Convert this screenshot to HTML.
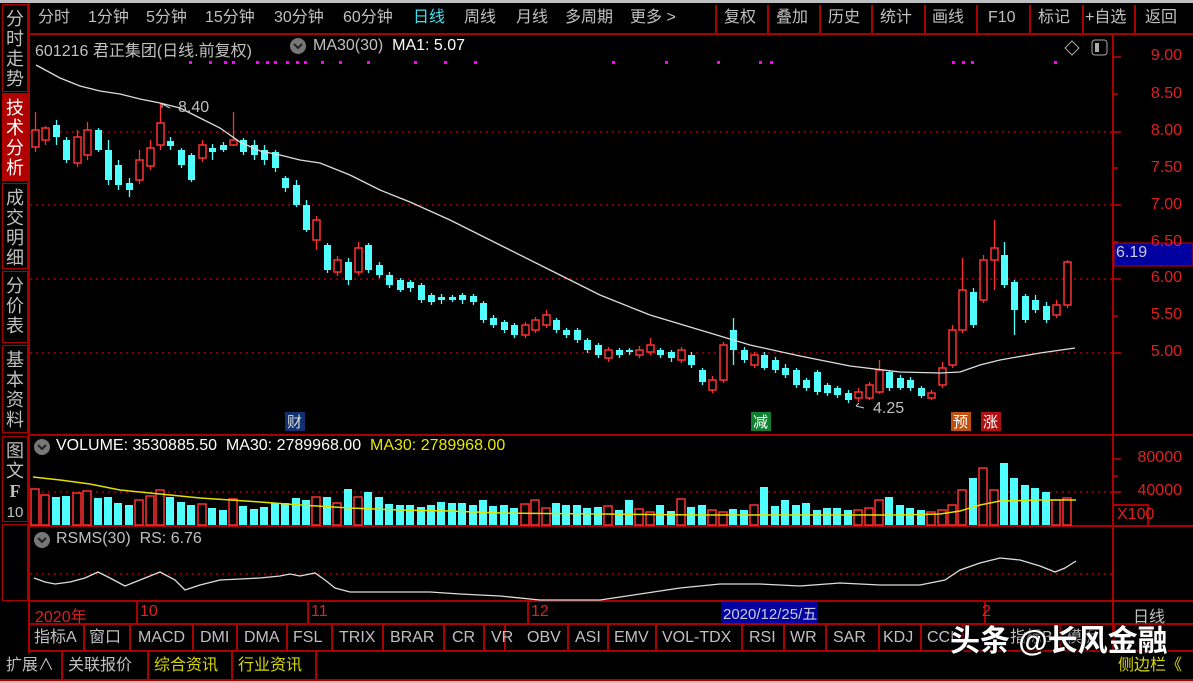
<!DOCTYPE html>
<html><head><meta charset="utf-8"><style>
*{margin:0;padding:0;box-sizing:border-box}
body{width:1193px;height:683px;background:#000;overflow:hidden;position:relative;font-family:"Liberation Sans","Noto Sans CJK SC",sans-serif;color:#c0c0c0}
.a{position:absolute;white-space:nowrap}
.t{font-size:16px;line-height:30px;top:3px}
.side{position:absolute;left:2px;width:26px;font-size:18px;line-height:20px;text-align:center;color:#c0c0c0;border:1px solid #a00}
.bt{font-size:16px;line-height:26px;top:625px}
.bb{font-size:16px;line-height:27px;top:652px}
.ax{font-size:16px;color:#e02020;left:1120px;width:62px;text-align:right}
</style></head><body>
<div class="a" style="left:0;top:0;width:1193px;height:3px;background:#bfbfbf"></div>
<div class="a" style="left:0;top:680px;width:1193px;height:3px;background:#bfbfbf"></div>
<div class="a" style="left:28px;top:33px;width:1165px;height:2px;background:#a00"></div>
<!-- sidebar -->
<div class="side" style="top:4px;height:88px;padding-top:4px">分<br>时<br>走<br>势</div>
<div class="side" style="top:93px;height:88px;padding-top:4px;background:#b00000;color:#fff;border-color:#b00000">技<br>术<br>分<br>析</div>
<div class="side" style="top:183px;height:86px;padding-top:4px">成<br>交<br>明<br>细</div>
<div class="side" style="top:271px;height:72px;padding-top:4px">分<br>价<br>表</div>
<div class="side" style="top:345px;height:88px;padding-top:4px">基<br>本<br>资<br>料</div>
<div class="side" style="top:436px;height:86px;padding-top:4px">图<br>文<br><b style="font-family:'Liberation Serif'">F</b><br><span style="font-size:15px">10</span></div>
<div class="side" style="top:524px;height:77px"></div>
<div class="a" style="left:28px;top:3px;width:2px;height:650px;background:#a00"></div>
<!-- top tabs -->
<div class="a t" style="left:38px">分时</div>
<div class="a t" style="left:88px">1分钟</div>
<div class="a t" style="left:146px">5分钟</div>
<div class="a t" style="left:205px">15分钟</div>
<div class="a t" style="left:274px">30分钟</div>
<div class="a t" style="left:343px">60分钟</div>
<div class="a t" style="left:413px;color:#40e0f0">日线</div>
<div class="a t" style="left:464px">周线</div>
<div class="a t" style="left:516px">月线</div>
<div class="a t" style="left:565px">多周期</div>
<div class="a t" style="left:630px">更多 &gt;</div>
<div class="a t" style="left:724px">复权</div>
<div class="a t" style="left:776px">叠加</div>
<div class="a t" style="left:828px">历史</div>
<div class="a t" style="left:880px">统计</div>
<div class="a t" style="left:932px">画线</div>
<div class="a t" style="left:988px">F10</div>
<div class="a t" style="left:1038px">标记</div>
<div class="a t" style="left:1085px">+自选</div>
<div class="a t" style="left:1145px">返回</div>
<!-- chart svg -->
<svg id="s" class="a" style="left:0;top:0" width="1193" height="683" xmlns="http://www.w3.org/2000/svg">
<g stroke="#a00" stroke-width="2" fill="none">
<path d="M716 5V33M768 5V33M820 5V33M872 5V33M925 5V33M977 5V33M1030 5V33M1083 5V33M1135 5V33"/>
<path d="M1113 35V651M30 435H1193M30 526H1193M30 601H1193M30 624H1193M30 651H1193M1113 505H1148V526"/>
<path d="M137 601V624M308 601V624M528 601V624M985 601V624"/>
<path d="M84 624V651M130 624V651M193 624V651M237 624V651M287 624V651M332 624V651M383 624V651M444 624V651M484 624V651M505 624V651M568 624V651M608 624V651M656 624V651M742 624V651M784 624V651M826 624V651M879 624V651M921 624V651M963 624V651M1060 624V651M1114 624V651M1150 624V651"/>
<path d="M62 652V680M148 652V680M232 652V680M316 652V680M0 680H1193"/>
</g>
<g stroke="#c00" stroke-width="1.2" stroke-dasharray="2 4">
<path d="M30 132H1113M30 205H1113M30 279H1113M30 353H1113M30 492H1113M30 574H1113"/>
</g>
<g stroke="#c00" stroke-width="1.5"><path d="M1113 57h8M1113 94h5M1113 132h8M1113 168h5M1113 205h8M1113 242h5M1113 279h8M1113 316h5M1113 353h8M1113 459h8M1113 476h5M1113 492h8M1113 562h0"/></g>
<g id="c"></g>
<g fill="#f0f" id="dots"></g>
<polyline fill="none" stroke="#ddd" stroke-width="1.3" points="36,65 60,78 80,86 100,91 120,94 140,99 160,103 180,108 200,118 220,128 240,142 260,151 280,155 300,160 320,163 350,175 380,190 410,202 450,220 500,245 550,270 600,295 650,315 700,330 750,345 800,356 850,366 900,372 940,373 960,372 980,365 1000,360 1040,353 1075,348"/>
<polyline fill="none" stroke="#e0e000" stroke-width="1.5" points="33,477 60,480 90,484 120,490 160,494 200,498 260,502 300,505 350,508 400,510 450,511 500,513 600,514 700,515 800,515 900,515 940,514 960,511 980,505 1000,501 1040,500 1076,500"/>
<polyline fill="none" stroke="#ddd" stroke-width="1.3" points="34,578 45,582 55,584 70,582 85,578 98,572 110,578 125,586 140,580 160,572 175,580 185,590 200,585 220,580 240,579 260,578 280,576 290,574 300,576 315,573 325,580 335,588 350,592 380,592 400,592 430,592 460,594 500,596 540,600 600,600 640,594 680,588 720,584 760,584 800,586 840,583 880,585 920,585 945,580 960,570 980,563 1000,558 1020,560 1040,566 1055,572 1065,568 1076,561"/>
<!-- labels -->
<rect x="285" y="412" width="20" height="19" fill="#103070"/>
<rect x="751" y="412" width="20" height="19" fill="#108030"/>
<rect x="951" y="412" width="20" height="19" fill="#c05010"/>
<rect x="981" y="412" width="20" height="19" fill="#b01010"/>
<rect x="1114" y="243" width="79" height="23" fill="#0000a0" stroke="#c00"/>
<rect x="721" y="602" width="97" height="21" fill="#0000a0"/>
<circle cx="298" cy="46" r="8" fill="#777"/><path d="M294 44l4 4 4-4" stroke="#222" stroke-width="2" fill="none"/>
<circle cx="42" cy="447" r="8" fill="#777"/><path d="M38 445l4 4 4-4" stroke="#222" stroke-width="2" fill="none"/>
<circle cx="42" cy="540" r="8" fill="#777"/><path d="M38 538l4 4 4-4" stroke="#222" stroke-width="2" fill="none"/>
<path d="M1072 41l7 7-7 7-7-7z" stroke="#aaa" fill="none"/>
<rect x="1092" y="40" width="15" height="15" rx="3" stroke="#aaa" fill="none"/><rect x="1095" y="43" width="4" height="9" fill="#aaa"/>
<path d="M162 104l8 4M162 104v4M856 406l8 2M856 406l3 -3" stroke="#ccc" fill="none"/>
</svg>
<div class="a" style="left:35px;top:37px;font-size:16px">601216 君正集团(日线.前复权)</div>
<div class="a" style="left:313px;top:37px;font-size:16px">MA30(30)&nbsp; <span style="color:#fff">MA1: 5.07</span></div>
<div class="a" style="left:178px;top:99px;font-size:16px">8.40</div>
<div class="a" style="left:873px;top:400px;font-size:16px">4.25</div>
<div class="a" style="left:287px;top:411px;font-size:15px;color:#ddd">财</div>
<div class="a" style="left:753px;top:411px;font-size:15px;color:#fff">减</div>
<div class="a" style="left:953px;top:411px;font-size:15px;color:#fff">预</div>
<div class="a" style="left:983px;top:411px;font-size:15px;color:#fff">涨</div>
<div class="a ax" style="top:47px">9.00</div>
<div class="a ax" style="top:85px">8.50</div>
<div class="a ax" style="top:122px">8.00</div>
<div class="a ax" style="top:159px">7.50</div>
<div class="a ax" style="top:196px">7.00</div>
<div class="a ax" style="top:233px">6.50</div>
<div class="a" style="left:1116px;top:244px;font-size:16px;color:#ccd">6.19</div>
<div class="a ax" style="top:269px">6.00</div>
<div class="a ax" style="top:306px">5.50</div>
<div class="a ax" style="top:343px">5.00</div>
<div class="a ax" style="top:449px">80000</div>
<div class="a ax" style="top:482px">40000</div>
<div class="a" style="left:1117px;top:506px;font-size:16px;color:#e02020">X100</div>
<div class="a" style="left:56px;top:437px;font-size:16px;color:#fff">VOLUME: 3530885.50&nbsp; MA30: 2789968.00&nbsp; <span style="color:#e8e800">MA30: 2789968.00</span></div>
<div class="a" style="left:56px;top:530px;font-size:16px">RSMS(30)&nbsp; RS: 6.76</div>
<div class="a" style="left:35px;top:603px;font-size:16px;color:#e02020">2020年</div>
<div class="a" style="left:140px;top:603px;font-size:16px;color:#e02020">10</div>
<div class="a" style="left:311px;top:603px;font-size:16px;color:#e02020">11</div>
<div class="a" style="left:531px;top:603px;font-size:16px;color:#e02020">12</div>
<div class="a" style="left:723px;top:603px;font-size:15px;color:#ccd">2020/12/25/五</div>
<div class="a" style="left:982px;top:603px;font-size:16px;color:#e02020">2</div>
<div class="a" style="left:1133px;top:603px;font-size:16px">日线</div>
<div class="a bt" style="left:34px">指标A</div><div class="a bt" style="left:89px">窗口</div>
<div class="a bt" style="left:138px">MACD</div><div class="a bt" style="left:200px">DMI</div>
<div class="a bt" style="left:244px">DMA</div><div class="a bt" style="left:293px">FSL</div>
<div class="a bt" style="left:339px">TRIX</div><div class="a bt" style="left:390px">BRAR</div>
<div class="a bt" style="left:452px">CR</div><div class="a bt" style="left:491px">VR</div>
<div class="a bt" style="left:527px">OBV</div><div class="a bt" style="left:575px">ASI</div>
<div class="a bt" style="left:614px">EMV</div><div class="a bt" style="left:662px">VOL-TDX</div>
<div class="a bt" style="left:749px">RSI</div><div class="a bt" style="left:790px">WR</div>
<div class="a bt" style="left:833px">SAR</div><div class="a bt" style="left:883px">KDJ</div>
<div class="a bt" style="left:927px">CCI</div><div class="a bt" style="left:1010px">指标B</div><div class="a bt" style="left:1066px">模板</div>
<div class="a bb" style="left:6px">扩展∧</div><div class="a bb" style="left:68px">关联报价</div>
<div class="a bb" style="left:154px;color:#d8d800">综合资讯</div><div class="a bb" style="left:238px;color:#d8d800">行业资讯</div>
<div class="a bb" style="left:1118px;color:#d8d800">侧边栏《</div>
<div class="a" style="left:950px;top:622px;font-size:30px;line-height:40px;color:#fff;font-weight:bold;text-shadow:0 0 3px #000,1px 1px 2px #000">头条 @长风金融</div>
<script>
var D=[
[1,130,147,112,152],[1,128,140,126,145],[0,125,137,120,145],[0,140,160,137,163],[1,137,163,130,167],[1,130,155,122,160],[0,130,150,128,152],[0,150,180,140,185],[0,165,185,160,190],[0,183,190,178,197],[1,160,180,150,184],[1,148,166,140,170],[1,123,145,103,150],[0,141,146,137,150],[0,150,165,148,168],[0,155,180,153,182],[1,145,158,140,162],[0,148,152,144,160],[0,145,150,142,152],[1,140,145,112,146],[0,140,152,138,155],[0,145,155,140,160],[0,150,160,145,165],[0,152,168,150,172],[0,178,188,176,192],[0,185,205,180,207],[0,205,230,200,232],[1,220,240,216,250],[0,245,270,243,273],[1,260,272,256,276],[0,262,280,258,285],[1,248,272,242,275],[0,245,270,243,273],[0,265,275,262,278],[0,275,285,272,288],[0,280,290,278,292],[0,282,288,280,292],[0,285,300,283,303],[0,295,302,293,305],[0,297,300,294,304],[0,297,300,295,302],[0,295,300,293,304],[0,296,302,294,305],[0,303,320,301,323],[0,318,325,315,328],[0,322,330,320,333],[0,325,335,323,338],[1,325,335,322,338],[1,320,330,317,333],[1,315,325,310,328],[0,320,330,318,333],[0,330,335,328,338],[0,330,340,328,343],[0,340,350,338,353],[0,345,355,343,358],[1,350,358,347,362],[0,350,355,348,358],[0,350,352,348,355],[1,350,355,346,358],[1,345,352,338,355],[0,350,355,348,358],[0,352,358,350,362],[1,350,360,347,363],[0,355,365,352,368],[0,370,382,368,385],[1,380,390,376,393],[1,345,380,342,383],[0,330,350,318,365],[0,350,360,347,363],[1,355,365,352,368],[0,355,368,352,370],[0,360,370,357,373],[0,368,375,364,378],[0,370,385,368,388],[0,380,388,378,391],[0,372,392,370,395],[0,385,393,383,396],[0,388,395,386,398],[0,393,400,390,403],[1,392,398,388,402],[1,385,398,382,400],[1,370,392,360,394],[0,372,388,370,391],[0,378,388,375,390],[0,380,388,377,391],[0,388,396,386,398],[1,393,398,390,400],[1,368,385,362,388],[1,330,365,325,368],[1,290,330,258,333],[0,292,325,288,328],[1,260,300,255,303],[1,248,260,220,290],[0,255,285,242,288],[0,282,310,280,335],[0,296,320,294,323],[0,300,310,295,313],[0,306,320,302,323],[1,305,315,300,318],[1,262,305,260,308]];
var V=[489,495,497,496,493,491,498,497,503,505,500,496,490,497,502,505,504,508,510,499,506,509,507,503,503,498,500,497,497,503,489,497,492,497,504,505,505,507,505,502,503,503,505,500,506,505,508,504,500,508,503,505,505,508,507,506,510,500,509,512,505,511,499,507,505,510,512,509,510,505,487,506,500,505,503,510,508,508,510,510,508,500,497,505,508,510,512,510,505,490,478,468,490,463,478,485,488,492,500,498,494];
var s='',ns='http://www.w3.org/2000/svg';
D.forEach(function(d,i){var x=Math.round(35+i*10.42)+.5,c=d[0]?'#ff3030':'#50ffff';
s+='<line x1="'+x+'" x2="'+x+'" y1="'+d[3]+'" y2="'+d[4]+'" stroke="'+c+'" stroke-width="1.3"/>';
var h=Math.max(d[2]-d[1],2);
s+='<rect x="'+(x-3.5)+'" y="'+d[1]+'" width="7" height="'+h+'" '+(d[0]?'fill="#000" stroke="'+c+'" stroke-width="1.5"':'fill="'+c+'"')+'/>';
var vy=V[i]||505,vx=x-4.5;
s+='<rect x="'+vx+'" y="'+vy+'" width="8" height="'+(525-vy)+'" '+(d[0]?'fill="#000" stroke="#ff3030" stroke-width="1.5"':'fill="#50ffff"')+'/>';
});
document.getElementById('c').innerHTML=s;
var P=[190,210,225,233,257,267,275,287,297,305,322,340,368,415,445,475,613,666,718,760,771,953,963,972,1055],t='';
P.forEach(function(x){t+='<rect x="'+(x-1)+'" y="61" width="3" height="3"/>';});
document.getElementById('dots').innerHTML=t;
</script>
</body></html>
